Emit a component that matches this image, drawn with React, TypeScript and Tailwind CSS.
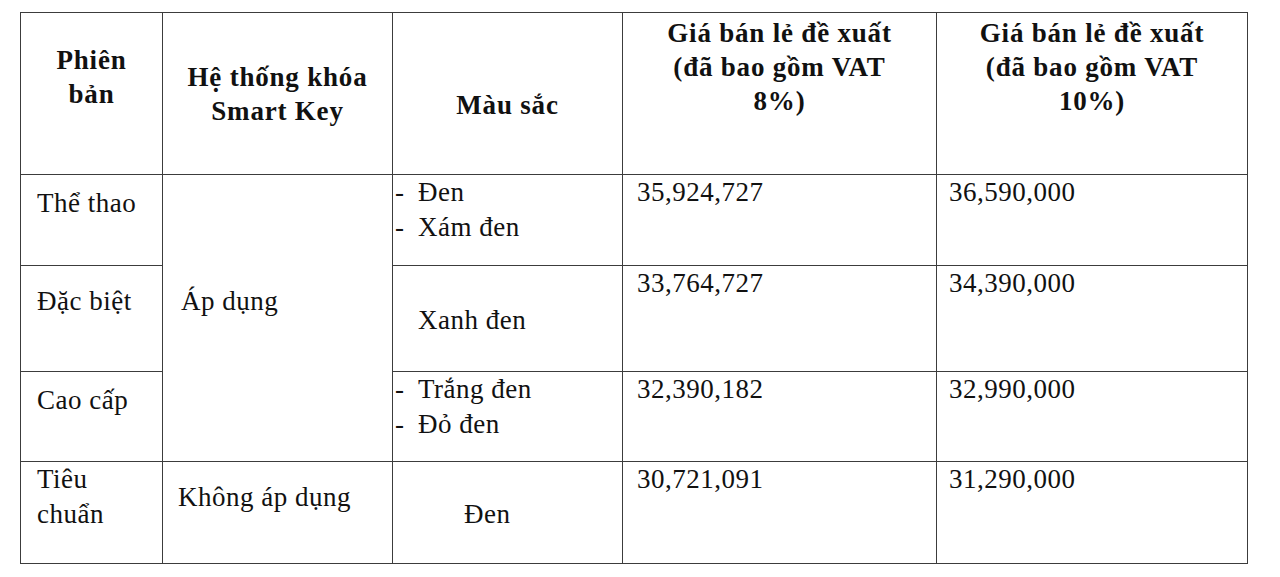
import React from "react";

const serif = { fontFamily: '"Liberation Serif", "Times New Roman", serif' };

function Dash({ children }: { children: React.ReactNode }) {
  return (
    <div className="flex">
      <span className="w-[25px] pl-[2px]">-</span>
      <span>{children}</span>
    </div>
  );
}

const cell = "border-r border-b border-[#3c3c3c]";
const head = `${cell} text-center font-bold text-[27px] leading-[34px] tracking-[0.8px]`;
const body = `${cell} text-[27px] leading-[35px] tracking-[0.5px]`;

export default function App() {
  return (
    <div className="w-[1280px] h-[577px] bg-white text-[#111]" style={serif}>
      <div className="pt-[12px] pl-[20px]">
        <div className="grid grid-cols-[142px_230px_230px_314px_311px] grid-rows-[162px_91px_106px_90px_102px] border-l border-t border-[#3c3c3c] w-fit">
          {/* Header */}
          <div className={`${head} pt-[30px]`}>
            Phiên
            <br />
            bản
          </div>
          <div className={`${head} pt-[47px]`}>
            Hệ thống khóa
            <br />
            Smart Key
          </div>
          <div className={`${head} pt-[75px]`}>Màu sắc</div>
          <div className={`${head} pt-[3px]`}>
            Giá bán lẻ đề xuất
            <br />
            (đã bao gồm VAT
            <br />
            8%)
          </div>
          <div className={`${head} pt-[3px]`}>
            Giá bán lẻ đề xuất
            <br />
            (đã bao gồm VAT
            <br />
            10%)
          </div>

          {/* Row 1 */}
          <div className={`${body} pl-[16px] pt-[11px]`}>Thể thao</div>
          <div className={`${body} row-span-3 pl-[18px] pt-[109px]`}>Áp dụng</div>
          <div className={`${body}`}>
            <Dash>Đen</Dash>
            <Dash>Xám đen</Dash>
          </div>
          <div className={`${body} pl-[14px]`}>35,924,727</div>
          <div className={`${body} pl-[12px]`}>36,590,000</div>

          {/* Row 2 */}
          <div className={`${body} pl-[16px] pt-[18px]`}>Đặc biệt</div>
          <div className={`${body} pl-[25px] pt-[37px]`}>Xanh đen</div>
          <div className={`${body} pl-[14px]`}>33,764,727</div>
          <div className={`${body} pl-[12px]`}>34,390,000</div>

          {/* Row 3 */}
          <div className={`${body} pl-[16px] pt-[11px]`}>Cao cấp</div>
          <div className={`${body}`}>
            <Dash>Trắng đen</Dash>
            <Dash>Đỏ đen</Dash>
          </div>
          <div className={`${body} pl-[14px]`}>32,390,182</div>
          <div className={`${body} pl-[12px]`}>32,990,000</div>

          {/* Row 4 */}
          <div className={`${body} pl-[16px]`}>
            Tiêu
            <br />
            chuẩn
          </div>
          <div className={`${body} pl-[15px] pt-[18px]`}>Không áp dụng</div>
          <div className={`${body} pl-[71px] pt-[35px]`}>Đen</div>
          <div className={`${body} pl-[14px]`}>30,721,091</div>
          <div className={`${body} pl-[12px]`}>31,290,000</div>
        </div>
      </div>
    </div>
  );
}
